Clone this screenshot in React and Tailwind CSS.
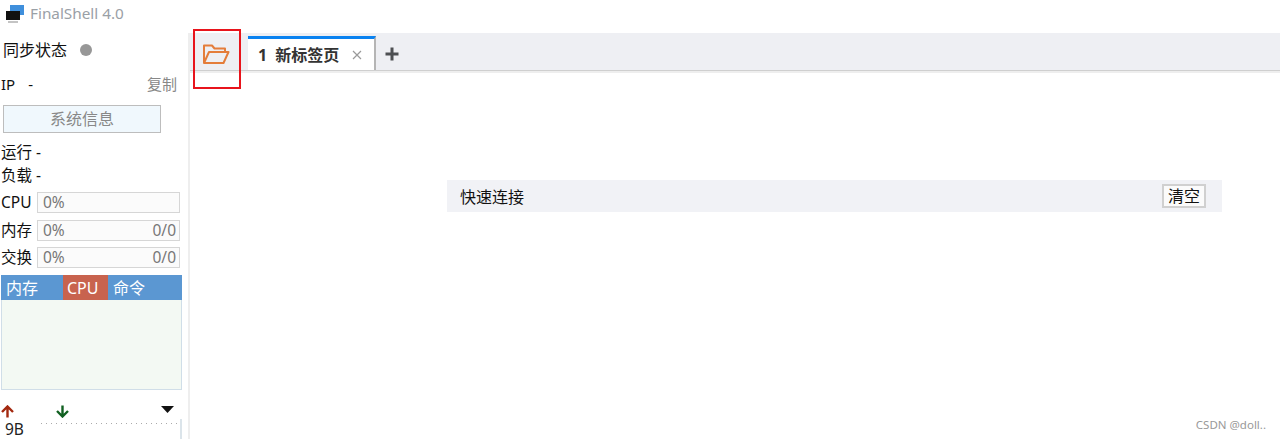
import React from 'react';

const MeterRow = ({ label, value, total }) => (
  <div className="flex items-center h-[21px] pl-[1px] pr-[8px]">
    <span className="w-[36px] shrink-0 pt-[1px] text-[15.5px] text-[#111]">{label}</span>
    <div className="flex-1 h-[21px] flex items-center justify-between pt-[1px] pl-[5px] pr-[3px] border border-[#d6d6d6] bg-[#fbfbfb] text-[15.5px] text-[#777]">
      <span>{value}</span>
      {total && <span>{total}</span>}
    </div>
  </div>
);

const Sidebar = () => (
  <div className="w-[190px] shrink-0 flex flex-col border-r-2 border-[#eeeeee]">
    <div className="flex items-center h-[34px] pl-[3px]">
      <span className="text-[16px] text-[#111]">同步状态</span>
      <span className="ml-[13px] w-[12px] h-[12px] rounded-full bg-[#979797]"></span>
    </div>
    <div className="flex items-center justify-between h-[34px] pl-[1px] pr-[11px] text-[15px]">
      <span className="text-[#111]">IP<span className="ml-[13px]">-</span></span>
      <span className="text-[#888]">复制</span>
    </div>
    <div className="mt-[4px] ml-[3px] w-[158px] h-[28px] flex items-center justify-center border border-[#bdbdbd] bg-[#f0f8fd] text-[16px] text-[#888]">
      系统信息
    </div>
    <div className="mt-[8px] pl-[1px] h-[23px] flex items-center text-[15.5px] text-[#111]">运行 -</div>
    <div className="pl-[1px] h-[23px] flex items-center text-[15.5px] text-[#111]">负载 -</div>
    <div className="mt-[5px] flex flex-col gap-[6.5px]">
      <MeterRow label="CPU" value="0%" />
      <MeterRow label="内存" value="0%" total="0/0" />
      <MeterRow label="交换" value="0%" total="0/0" />
    </div>
    <div className="mt-[7px] ml-[1px] w-[181px]">
      <div className="flex h-[25px] bg-[#5b97d2] text-[16px] text-white">
        <div className="w-[62px] pl-[5px] leading-[26px]">内存</div>
        <div className="w-[45px] pl-[4px] leading-[26px] bg-[#c8634e]">CPU</div>
        <div className="pl-[5px] leading-[26px]">命令</div>
      </div>
      <div className="h-[90px] bg-[#f3f9f3] border border-t-0 border-[#d0dee8]"></div>
    </div>
    <div className="mt-[14px] h-[14px] ml-[1px] w-[173px] flex items-center justify-between">
      <svg width="13" height="13" viewBox="0 0 13 13" fill="none" stroke="#a3280f" strokeWidth="2.4"><path d="M1 7 L6.5 1.5 L12 7 M6.5 2 V12.5" /></svg>
      <svg className="ml-[42px]" width="13" height="13" viewBox="0 0 13 13" fill="none" stroke="#116021" strokeWidth="2.4"><path d="M1 6 L6.5 11.5 L12 6 M6.5 11 V0.5" /></svg>
      <svg className="ml-auto mb-[3px]" width="13" height="7" viewBox="0 0 13 7"><path d="M0 0 H13 L6.5 7 Z" fill="#111" /></svg>
    </div>
    <div className="flex ml-[5px] mt-[1px] w-[177px]">
      <span className="w-[36px] text-[15.5px] leading-[20px] text-[#222]">9B</span>
      <div className="flex-1 h-[20px] border-r-2 border-[#dbe4ea]">
        <svg className="block" width="136" height="6"><line x1="0" y1="4.5" x2="136" y2="4.5" stroke="#aaaaaa" strokeDasharray="1 4" /></svg>
      </div>
    </div>
  </div>
);

const TabBar = () => (
  <div className="h-[38px] flex items-end bg-[#eeeff3] border-b border-[#cfcfcf]">
    <div className="w-[58px] h-[33px] shrink-0 flex items-center pl-[12px]">
      <svg width="28" height="22" viewBox="0 0 28 22" fill="none" stroke="#e47d3a" strokeWidth="2" strokeLinejoin="round">
        <path d="M2 20 V2.5 H10 L12.5 5.5 H23 V9" />
        <path d="M2 20 L7 9 H26.5 L21.5 20 Z" />
      </svg>
    </div>
    <div className="w-[128px] h-[34px] shrink-0 flex items-center bg-white border-t-[3px] border-t-[#0a82f0] border-r-2 border-r-[#b5b5b5] pl-[10px] text-[16px] font-bold text-[#333]">
      <span>1</span>
      <span className="ml-[8px] font-semibold">新标签页</span>
      <svg className="ml-[13px]" width="10" height="10" viewBox="0 0 10 10" stroke="#9a9a9a" strokeWidth="1.2"><path d="M1 1 L9 9 M9 1 L1 9" /></svg>
    </div>
    <div className="ml-[9px] h-[33px] flex items-center">
      <svg width="14" height="14" viewBox="0 0 14 14"><path d="M5.5 0.5 H8.5 V5.5 H13.5 V8.5 H8.5 V13.5 H5.5 V8.5 H0.5 V5.5 H5.5 Z" fill="#4d4f52" /></svg>
    </div>
  </div>
);

export default function App() {
  return (
    <div className="relative w-[1280px] h-[439px] overflow-hidden bg-white" style={{ fontFamily: '"Noto Sans", "Noto Sans CJK SC", sans-serif' }}>
      <div className="h-[33px] flex items-start pt-[5px] pl-[6px]">
        <svg width="19" height="18" viewBox="0 0 19 18">
          <rect x="4" y="0" width="14" height="10" fill="#3f8fdc" />
          <rect x="0" y="6" width="14" height="9" fill="#111" />
          <rect x="2" y="16" width="10" height="2" fill="#c4c4c4" />
        </svg>
        <span className="ml-[5px] mt-[-2px] text-[15.3px] leading-[20px] text-[#9aa0a6]">FinalShell 4.0</span>
      </div>
      <div className="flex">
        <Sidebar />
        <div className="flex-1">
          <TabBar />
          <div className="h-[2px] bg-[#eeeeee]"></div>
          <div className="mt-[107px] ml-[257px] mr-[58px] h-[32px] flex items-center justify-between bg-[#f1f2f6] pl-[13px] pr-[16px]">
            <span className="pt-[1px] text-[16px] text-[#111]">快速连接</span>
            <div className="w-[44px] h-[24px] flex items-center justify-center border-2 border-[#d0d0d0] bg-[#fbfbfb] text-[16px] text-[#111]">清空</div>
          </div>
        </div>
      </div>
      {/* annotation drawn over the screenshot */}
      <div className="absolute left-[193px] top-[29px] w-[48px] h-[60px] border-2 border-[#e8141c]"></div>
      <div className="absolute right-[14px] top-[416px] text-[11.5px] text-[#999]">CSDN @doll..</div>
    </div>
  );
}
